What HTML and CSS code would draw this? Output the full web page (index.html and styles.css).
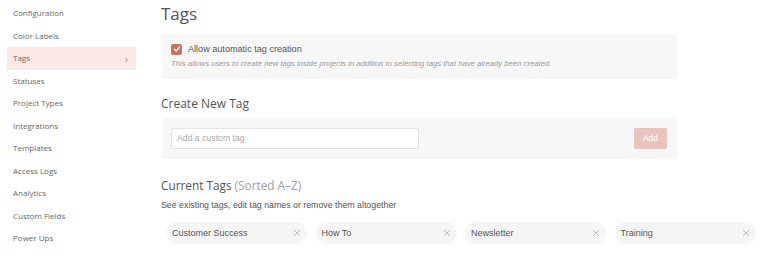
FILE: index.html
```
<!DOCTYPE html>
<html>
<head>
<meta charset="utf-8">
<link rel="stylesheet" href="styles.css">
</head>
<body>
<div class="page">
  <nav class="sidebar">
    <div class="nav-item">Configuration</div>
    <div class="nav-item">Color Labels</div>
    <div class="nav-item active">Tags<span class="chev">&#8250;</span></div>
    <div class="nav-item">Statuses</div>
    <div class="nav-item">Project Types</div>
    <div class="nav-item">Integrations</div>
    <div class="nav-item">Templates</div>
    <div class="nav-item">Access Logs</div>
    <div class="nav-item">Analytics</div>
    <div class="nav-item">Custom Fields</div>
    <div class="nav-item">Power Ups</div>
  </nav>
  <main class="main">
    <h1 class="title">Tags</h1>
    <section class="box box-auto">
      <label class="check-row">
        <span class="checkbox"><svg viewBox="0 0 12 12" width="8" height="8"><path d="M2 6.2 L4.8 9 L10 3" fill="none" stroke="#fff" stroke-width="1.8" stroke-linecap="round" stroke-linejoin="round"/></svg></span>
        <span class="check-label">Allow automatic tag creation</span>
      </label>
      <p class="hint">This allows users to create new tags inside projects in addition to selecting tags that have already been created.</p>
    </section>
    <h2 class="heading">Create New Tag</h2>
    <section class="box box-create">
      <div class="input">Add a custom tag</div>
      <div class="btn-add">Add</div>
    </section>
    <h2 class="heading heading-current">Current Tags <span class="muted">(Sorted A–Z)</span></h2>
    <p class="desc">See existing tags, edit tag names or remove them altogether</p>
    <div class="tags">
      <div class="tag"><span>Customer Success</span><svg class="x" viewBox="0 0 8 8" width="8" height="8"><path d="M1 1 L7 7 M7 1 L1 7" stroke="#bdbdbd" stroke-width="1"/></svg></div>
      <div class="tag"><span>How To</span><svg class="x" viewBox="0 0 8 8" width="8" height="8"><path d="M1 1 L7 7 M7 1 L1 7" stroke="#bdbdbd" stroke-width="1"/></svg></div>
      <div class="tag"><span>Newsletter</span><svg class="x" viewBox="0 0 8 8" width="8" height="8"><path d="M1 1 L7 7 M7 1 L1 7" stroke="#bdbdbd" stroke-width="1"/></svg></div>
      <div class="tag"><span>Training</span><svg class="x" viewBox="0 0 8 8" width="8" height="8"><path d="M1 1 L7 7 M7 1 L1 7" stroke="#bdbdbd" stroke-width="1"/></svg></div>
    </div>
  </main>
</div>
</body>
</html>
```
FILE: styles.css
```
* { box-sizing: border-box; }
body { margin: 0; background: #fff; font-family: "Liberation Sans", Arial, sans-serif; color: #555; }
.page { display: flex; width: 770px; height: 256px; overflow: hidden; }
.sidebar { width: 143px; flex: none; padding: 2px 7px 0; display: flex; flex-direction: column; }
.nav-item { height: 22.5px; line-height: 22.5px; padding: 0 6px; font-family: "Open Sans", sans-serif; font-size: 8px; color: #666; display: flex; justify-content: space-between; align-items: center; }
.nav-item.active { background: #f9e8e4; color: #7a6a66; }
.chev { font-size: 11px; color: #999; line-height: 1; margin-right: 2px; }
.main { flex: 1; padding-left: 18px; }
.title { margin: 0; font-family: "Open Sans", sans-serif; font-weight: 400; font-size: 17px; line-height: 28px; color: #555; }
.box { background: #f7f7f7; width: 515px; margin-left: 1px; border-radius: 2px; }
.box-auto { margin-top: 6px; padding: 9px 9px 10px; height: 45px; }
.check-row { display: flex; align-items: center; height: 12px; }
.checkbox { width: 11px; height: 11px; background: #c9735c; border-radius: 2px; display: flex; align-items: center; justify-content: center; }
.check-label { margin-left: 6px; font-size: 9.1px; color: #555; }
.hint { margin: 3px 0 0; font-size: 7.7px; line-height: 11px; font-style: italic; color: #9a9a9a; white-space: nowrap; }
.heading { margin: 15px 0 0; font-family: "Open Sans", sans-serif; font-weight: 400; font-size: 12px; line-height: 20px; color: #555; }
.heading-current { margin-top: 16px; font-size: 11.8px; }
.muted { color: #a0a0a0; }
.box-create { margin-top: 4px; height: 41px; padding: 10px 10px 10px 9px; display: flex; justify-content: space-between; align-items: center; }
.input { width: 248px; height: 21px; background: #fff; border: 1px solid #e3e3e3; border-radius: 2px; padding-left: 5px; font-size: 8.7px; line-height: 19px; color: #aaa; }
.btn-add { width: 33px; height: 21px; background: #e9c4bc; color: #fff; font-size: 8.5px; line-height: 21px; text-align: center; border-radius: 2px; }
.desc { margin: 4px 0 0; font-size: 8.8px; line-height: 12px; color: #555; }
.tags { margin: 11px 0 0 5px; display: grid; grid-template-columns: repeat(4, 141px); column-gap: 8.5px; }
.tag { height: 22px; background: #f5f5f5; border-radius: 11px; padding: 0 6px 0 6px; display: flex; justify-content: space-between; align-items: center; font-size: 9px; color: #555; }
.x { flex: none; }
```
